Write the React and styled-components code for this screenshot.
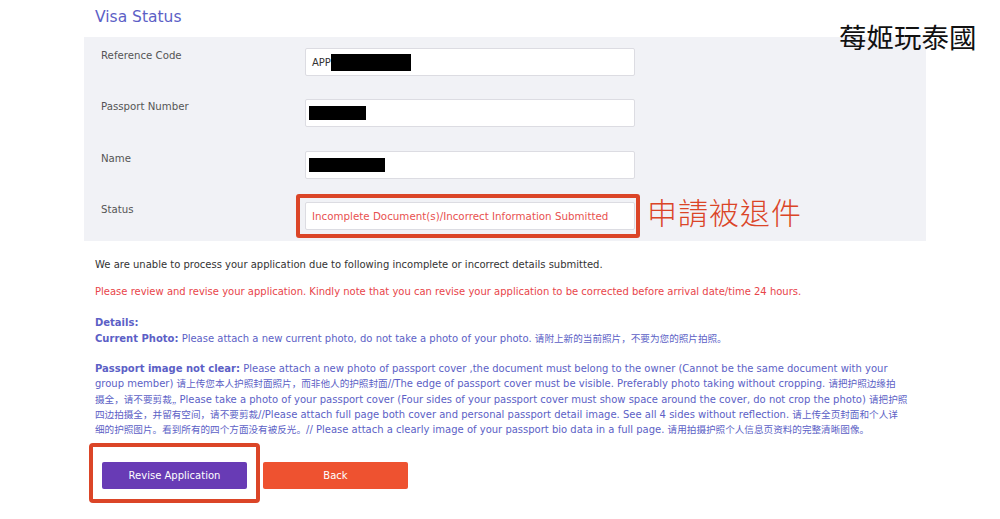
import React from "react";
import styled, { createGlobalStyle } from "styled-components";

const GlobalStyle = createGlobalStyle`
  html, body { margin: 0; padding: 0; background: #ffffff; }
  body { font-family: "DejaVu Sans", "Noto Sans CJK SC", sans-serif; }
`;

const Page = styled.div`
  position: relative;
  width: 1000px;
  height: 519px;
  overflow: hidden;
  background: #fff;
`;

const Container = styled.div`
  margin-left: 84px;
  width: 842px;
`;

const Title = styled.h2`
  margin: 0;
  height: 37px;
  padding-left: 11px;
  font-size: 15.5px;
  font-weight: 400;
  line-height: 35px;
  color: #5c5fc6;
`;

const Panel = styled.div`
  background: #f1f2f6;
  padding: 11px 0 11px 17px;
  display: flex;
  flex-direction: column;
  gap: 23.3px;
`;

const Row = styled.div`
  display: grid;
  grid-template-columns: 204px 330px;
  align-items: start;
`;

const Label = styled.div`
  font-size: 10.2px;
  color: #555;
  line-height: 14px;
  padding-top: 1px;
`;

const FieldWrap = styled.div`
  position: relative;
`;

const Field = styled.div`
  height: 28px;
  box-sizing: border-box;
  background: #fff;
  border: 1px solid #dcdce2;
  border-radius: 2px;
  padding: 0 3px;
  display: flex;
  align-items: center;
  font-size: ${(p) => (p.$status ? "10.3px" : "10px")};
  color: ${(p) => (p.$status ? "#e8514f" : "#333")};
  white-space: nowrap;
`;

const StatusText = styled.span`
  padding-left: 3px;
`;

const Redact = styled.span`
  display: inline-block;
  width: ${(p) => p.$w}px;
  height: ${(p) => p.$h}px;
  background: #000;
`;

const Prefix = styled.span`
  padding-left: 3px;
`;

const HighlightBox = styled.div`
  position: absolute;
  left: -9px;
  top: -8px;
  right: -5px;
  bottom: -8px;
  border: 4px solid #db4527;
  border-radius: 3px;
  pointer-events: none;
`;

const AnnotationText = styled.div`
  position: absolute;
  left: 342px;
  top: -11px;
  font-family: "Noto Sans CJK TC", sans-serif;
  font-weight: 300;
  font-size: 30px;
  line-height: 40px;
  color: #db4527;
  white-space: nowrap;
  letter-spacing: 1px;
`;

const Watermark = styled.div`
  position: absolute;
  left: 839px;
  top: 16px;
  font-family: "Noto Sans CJK TC", sans-serif;
  font-weight: 400;
  font-size: 27.5px;
  line-height: 40px;
  color: #111;
  white-space: nowrap;
`;

const Body = styled.div`
  width: 821px;
  padding: 16px 0 0 11px;
  font-size: 10px;
  line-height: 15.25px;
`;

const Para = styled.p`
  margin: 0 0 12px;
  color: ${(p) => p.$color || "#333"};
`;

const Details = styled.div`
  margin-top: 16px;
  color: #5c5fc6;
`;

const Strong = styled.b`
  font-weight: 700;
`;

const Zh = styled.span`
  font-family: "Noto Sans CJK SC", sans-serif;
  font-size: 9.6px;
  line-height: 1;
`;

const Block = styled.p`
  margin: 0 0 15.25px;
  white-space: ${(p) => (p.$lines ? "nowrap" : "normal")};
`;

const Buttons = styled.div`
  display: flex;
  gap: 16px;
  margin: 25px 0 0 18px;
`;

const BtnWrap = styled.div`
  position: relative;
`;

const Button = styled.button`
  width: 145px;
  height: 27px;
  border: none;
  border-radius: 2px;
  font-family: inherit;
  font-size: 10px;
  color: #fff;
  background: ${(p) => (p.$variant === "primary" ? "#683bb5" : "#ee5230")};
  cursor: pointer;
`;

const BtnHighlight = styled.div`
  position: absolute;
  left: -13px;
  top: -19px;
  right: -13px;
  bottom: -14px;
  border: 4px solid #db4527;
  border-radius: 4px;
  pointer-events: none;
`;

export default function App() {
  return (
    <Page>
      <GlobalStyle />
      <Container>
        <Title>Visa Status</Title>
        <Panel>
          <Row>
            <Label>Reference Code</Label>
            <FieldWrap>
              <Field>
                <Prefix>APP</Prefix>
                <Redact $w={80} $h={17} />
              </Field>
            </FieldWrap>
          </Row>
          <Row>
            <Label>Passport Number</Label>
            <FieldWrap>
              <Field>
                <Redact $w={57} $h={14} />
              </Field>
            </FieldWrap>
          </Row>
          <Row>
            <Label>Name</Label>
            <FieldWrap>
              <Field>
                <Redact $w={76} $h={14} />
              </Field>
            </FieldWrap>
          </Row>
          <Row>
            <Label>Status</Label>
            <FieldWrap>
              <Field $status>
                <StatusText>Incomplete Document(s)/Incorrect Information Submitted</StatusText>
              </Field>
              <HighlightBox />
              <AnnotationText>申請被退件</AnnotationText>
            </FieldWrap>
          </Row>
        </Panel>
        <Body>
          <Para>We are unable to process your application due to following incomplete or incorrect details submitted.</Para>
          <Para $color="#e8454a">
            Please review and revise your application. Kindly note that you can revise your application to be corrected before arrival date/time 24 hours.
          </Para>
          <Details>
            <Block>
              <Strong>Details:</Strong>
              <br />
              <Strong>Current Photo:</Strong> Please attach a new current photo, do not take a photo of your photo. <Zh>请附上新的当前照片，不要为您的照片拍照。</Zh>
            </Block>
            <Block $lines>
              <Strong>Passport image not clear:</Strong> Please attach a new photo of passport cover ,the document must belong to the owner (Cannot be the same document with your
              <br />
              group member) <Zh>请上传您本人护照封面照片，而非他人的护照封面</Zh>//The edge of passport cover must be visible. Preferably photo taking without cropping. <Zh>请把护照边缘拍</Zh>
              <br />
              <Zh>摄全，请不要剪裁„</Zh> Please take a photo of your passport cover (Four sides of your passport cover must show space around the cover, do not crop the photo) <Zh>请把护照</Zh>
              <br />
              <Zh>四边拍摄全，并留有空间，请不要剪裁</Zh>//Please attach full page both cover and personal passport detail image. See all 4 sides without reflection. <Zh>请上传全页封面和个人详</Zh>
              <br />
              <Zh>细的护照图片。看到所有的四个方面没有被反光。</Zh>// Please attach a clearly image of your passport bio data in a full page. <Zh>请用拍摄护照个人信息页资料的完整清晰图像。</Zh>
            </Block>
          </Details>
        </Body>
        <Buttons>
          <BtnWrap>
            <Button $variant="primary">Revise Application</Button>
            <BtnHighlight />
          </BtnWrap>
          <BtnWrap>
            <Button>Back</Button>
          </BtnWrap>
        </Buttons>
      </Container>
      <Watermark>莓姬玩泰國</Watermark>
    </Page>
  );
}
